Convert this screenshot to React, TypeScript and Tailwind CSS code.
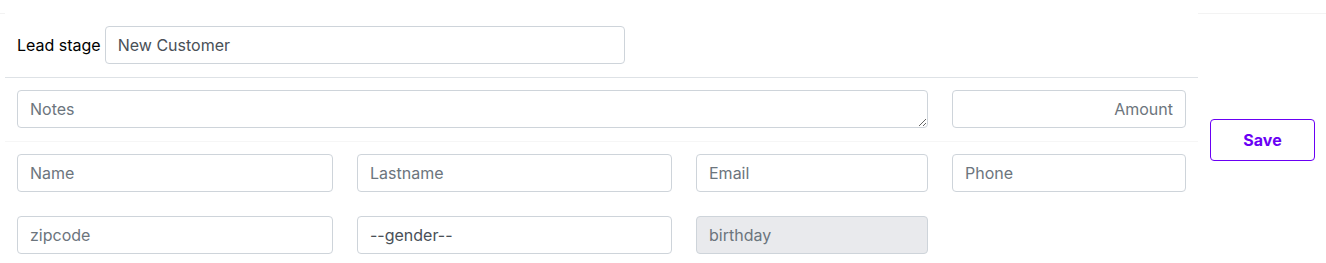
import React from 'react';

const field =
  'h-[38px] w-full rounded-[4px] border border-[#ced4da] bg-white px-[12px] text-[16px] text-[#495057] placeholder:text-[#6c757d] outline-none';

export default function App() {
  return (
    <div className="flex w-[1326px] bg-white pt-[13px] font-['Inter','Liberation_Sans',sans-serif]">
      <div className="w-[5px] border-t border-[#f3f3f3]" />

      <div className="w-[1193px] bg-white">
        <div className="flex items-center gap-[4px] border-b border-[#dee2e6] px-[12px] py-[13px]">
          <span className="text-[16px] text-black">Lead stage</span>
          <input className={`${field} !w-[520px]`} defaultValue="New Customer" />
        </div>

        <div className="grid grid-cols-[911px_234px] gap-x-6 border-b border-[#f6f6f6] px-[12px] pt-[12px] pb-[13px]">
          <textarea rows={1} className={`${field} py-[6px] leading-[24px]`} placeholder="Notes" />
          <input className={`${field} text-right`} placeholder="Amount" />
        </div>

        <div className="grid grid-cols-[316px_315px_232px_234px] gap-x-6 gap-y-6 px-[12px] pt-[12px] pb-[9px]">
          <input className={field} placeholder="Name" />
          <input className={field} placeholder="Lastname" />
          <input className={field} placeholder="Email" />
          <input className={field} placeholder="Phone" />
          <input className={field} placeholder="zipcode" />
          <select className={`${field} appearance-none text-[#212529]`} defaultValue="">
            <option value="">--gender--</option>
            <option value="m">Male</option>
            <option value="f">Female</option>
          </select>
          <input className={`${field} !bg-[#e9eaed]`} placeholder="birthday" disabled />
        </div>
      </div>

      <div className="flex-1 border-t border-[#f3f3f3] pl-[12px] pt-[105px]">
        <button className="h-[42px] w-[105px] rounded-[4px] border border-[#6a00f4] bg-white text-[16px] font-bold text-[#6a00f4]">
          Save
        </button>
      </div>
    </div>
  );
}
